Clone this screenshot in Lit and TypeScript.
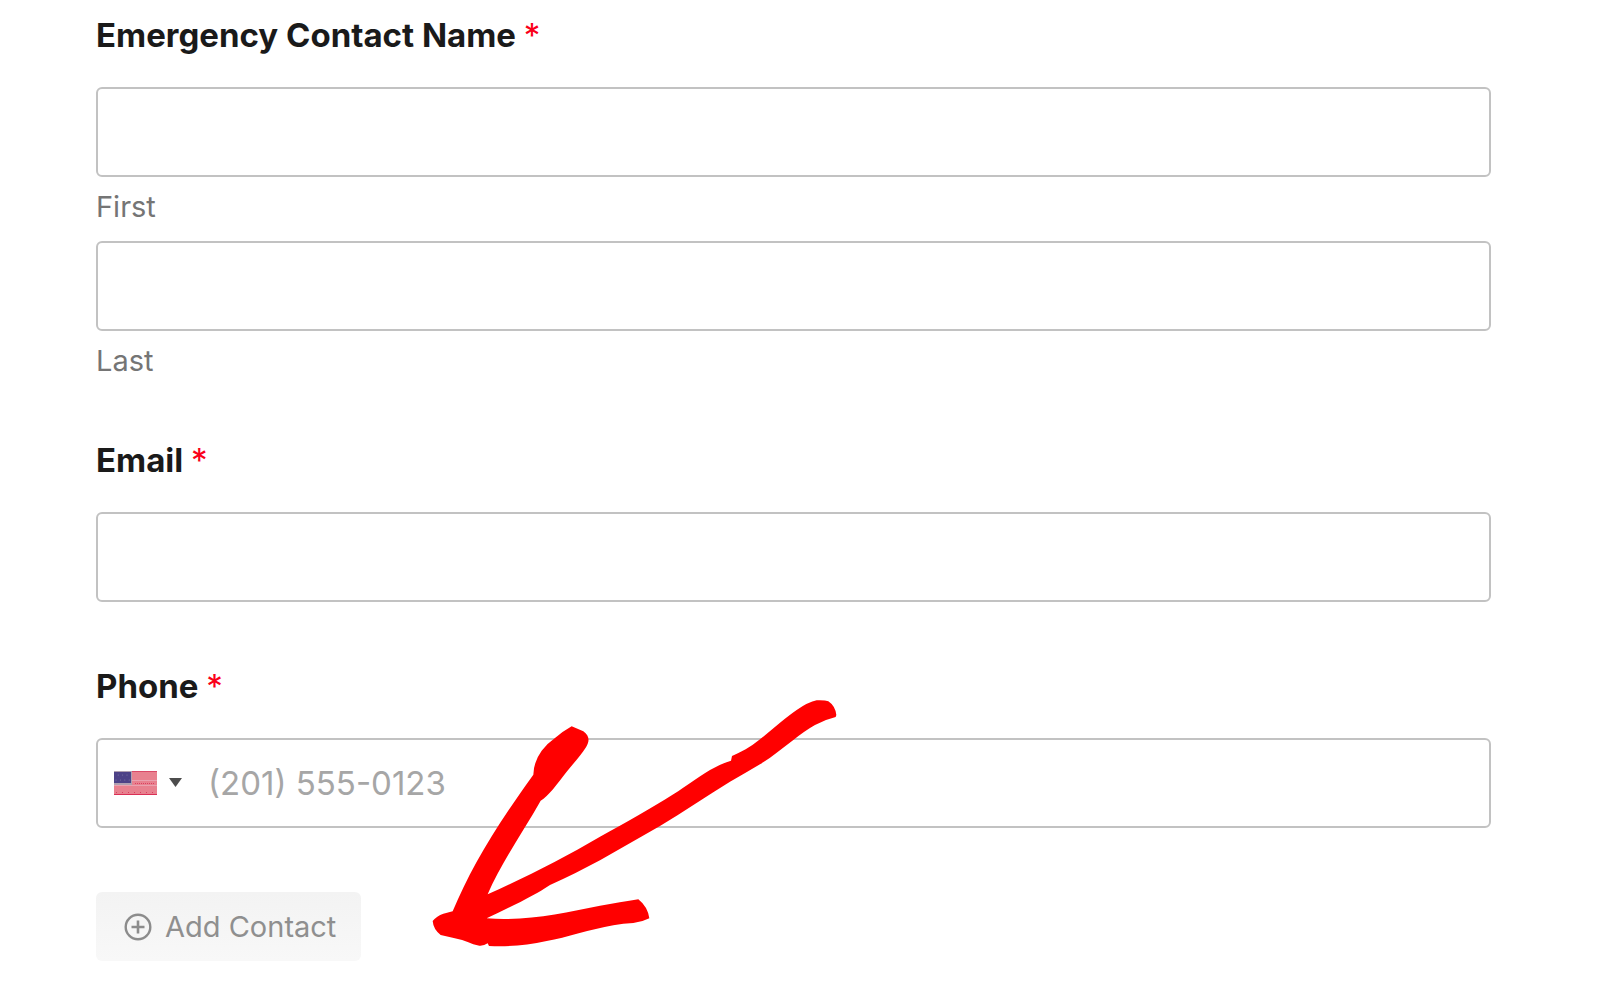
import { LitElement, html, css, svg } from "lit";
import { customElement } from "lit/decorators.js";

const stars = [0, 1, 2, 3, 4, 5, 6];

@customElement("app-root")
export class AppRoot extends LitElement {
  static styles = css`
    :host {
      display: block;
      position: relative;
      background: #fff;
      font-family: Inter, "Liberation Sans", sans-serif;
      color: #1a1a1a;
    }
    .form {
      display: flex;
      flex-direction: column;
      gap: 64px;
      padding: 15px 109px 39px 96px;
    }
    .field {
      display: flex;
      flex-direction: column;
      gap: 32px;
    }
    .label {
      font-size: 33px;
      line-height: 40px;
      font-weight: 700;
    }
    .required {
      color: #fa0019;
      font-weight: 400;
    }
    .names {
      display: flex;
      flex-direction: column;
      gap: 19px;
    }
    .name {
      display: flex;
      flex-direction: column;
      gap: 15px;
    }
    .sublabel {
      font-size: 29px;
      line-height: 30px;
      color: #757575;
    }
    .box {
      box-sizing: border-box;
      width: 100%;
      height: 90px;
      border: 2px solid #c2c2c2;
      border-radius: 6px;
      background: #fff;
      font: inherit;
      font-size: 33px;
      color: #333;
    }
    .text {
      padding: 0 24px;
    }
    .phone {
      display: flex;
      align-items: stretch;
    }
    .country {
      display: flex;
      align-items: center;
      gap: 12px;
      padding: 0 12px 0 16px;
      border: 0;
      background: none;
    }
    .number {
      flex: 1;
      min-width: 0;
      padding: 0 14px;
      border: 0;
      outline: 0;
      background: none;
      font: inherit;
      color: #333;
    }
    .number::placeholder {
      color: #a6a6a6;
      opacity: 1;
    }
    .add {
      display: flex;
      align-items: center;
      align-self: flex-start;
      gap: 13px;
      height: 69px;
      padding: 0 25px 0 28px;
      border: 0;
      border-radius: 6px;
      background: linear-gradient(#f3f3f3, #f8f8f8);
      font: inherit;
      font-size: 29px;
      color: #8f8f8f;
    }
    .flag,
    .caret,
    .plus,
    .arrow {
      display: block;
    }
    .arrow {
      position: absolute;
      left: 430px;
      top: 697px;
      pointer-events: none;
    }
  `;

  private star() {
    return html`<span class="required">*</span>`;
  }

  private flag() {
    return html`<svg class="flag" width="43" height="24" viewBox="0 0 43 24" aria-hidden="true">
      <rect width="43" height="24" fill="#e8818f" />
      <rect width="43" height="1" fill="#da4a68" />
      <rect y="23" width="43" height="1" fill="#da2f55" />
      <path d="M2 21.5H43" stroke="#da3f60" stroke-dasharray="1 5" />
      <path d="M21 12.5H40" stroke="#da3f60" stroke-dasharray="1 1" />
      <path d="M18 9.5H43M0 14.5H43" stroke="#eaa2b0" />
      <rect width="18" height="14" fill="#b0a0b0" />
      <rect y="1" width="17" height="11" fill="#4d4287" />
      ${stars.map((i) => svg`<circle cx=${2 + i * 2.2} cy=${i % 2 ? 4 : 9} r="0.5" fill="#8580a8" />`)}
    </svg>`;
  }

  render() {
    return html`
      <form class="form" @submit=${(e: Event) => e.preventDefault()}>
        <div class="field" role="group" aria-labelledby="contact">
          <div class="label" id="contact">Emergency Contact Name ${this.star()}</div>
          <div class="names">
            <div class="name">
              <input class="box text" id="first" type="text" required />
              <label class="sublabel" for="first">First</label>
            </div>
            <div class="name">
              <input class="box text" id="last" type="text" required />
              <label class="sublabel" for="last">Last</label>
            </div>
          </div>
        </div>
        <div class="field">
          <label class="label" for="email">Email ${this.star()}</label>
          <input class="box text" id="email" type="email" required />
        </div>
        <div class="field">
          <label class="label" for="phone">Phone ${this.star()}</label>
          <div class="box phone">
            <button class="country" type="button" aria-label="United States">
              ${this.flag()}
              <svg class="caret" width="13" height="11" viewBox="0 0 13 11" aria-hidden="true">
                <path d="M0 0H13L6.5 9Z" fill="#4c4c4c" />
              </svg>
            </button>
            <input class="number" id="phone" type="tel" placeholder="(201) 555-0123" required />
          </div>
        </div>
        <button class="add" type="button">
          <svg class="plus" width="28" height="28" viewBox="0 0 28 28" fill="none" stroke="#8c8c8c" aria-hidden="true">
            <circle cx="14" cy="14" r="12.3" stroke-width="2.4" />
            <path d="M14 7.5V20.5M7.5 14H20.5" stroke-width="2.6" />
          </svg>
          Add Contact
        </button>
      </form>
      <svg class="arrow" width="410" height="253" viewBox="30 21 1230 759" aria-hidden="true">
        <path
          fill="#f00"
          d="M455 109L490 124C508 137 510 152 498 172C482 198 458 222 440 245C412 282 385 318 362 332C310 424 240 525 203 613C320 560 430 505 540 440C620 397 690 357 760 313C800 287 830 265 870 240Q905 220 933 212L936 198Q955 190 977 178Q998 166 1020 148L1080 98Q1110 74 1130 60Q1165 36 1190 31Q1215 30 1225 34Q1246 48 1249 75L1247 81Q1217 88 1185 105Q1155 122 1120 150L1070 188Q1045 208 1020 223Q975 250 930 275C860 318 790 366 720 408L540 511C490 538 440 563 390 585C370 598 355 608 340 615C290 643 245 663 200 685C320 694 430 669 540 647C580 640 620 634 655 628Q683 650 688 685Q665 697 640 699Q610 700 580 706C510 718 440 743 380 753C320 766 265 771 207 768L203 760Q192 768 178 767Q158 764 145 757Q125 748 98 743L62 735Q40 718 38 693Q50 678 70 671L98 664C150 540 220 420 340 254Q341 215 365 182Q382 160 405 144Q430 123 455 109Z"
        />
      </svg>
    `;
  }
}
